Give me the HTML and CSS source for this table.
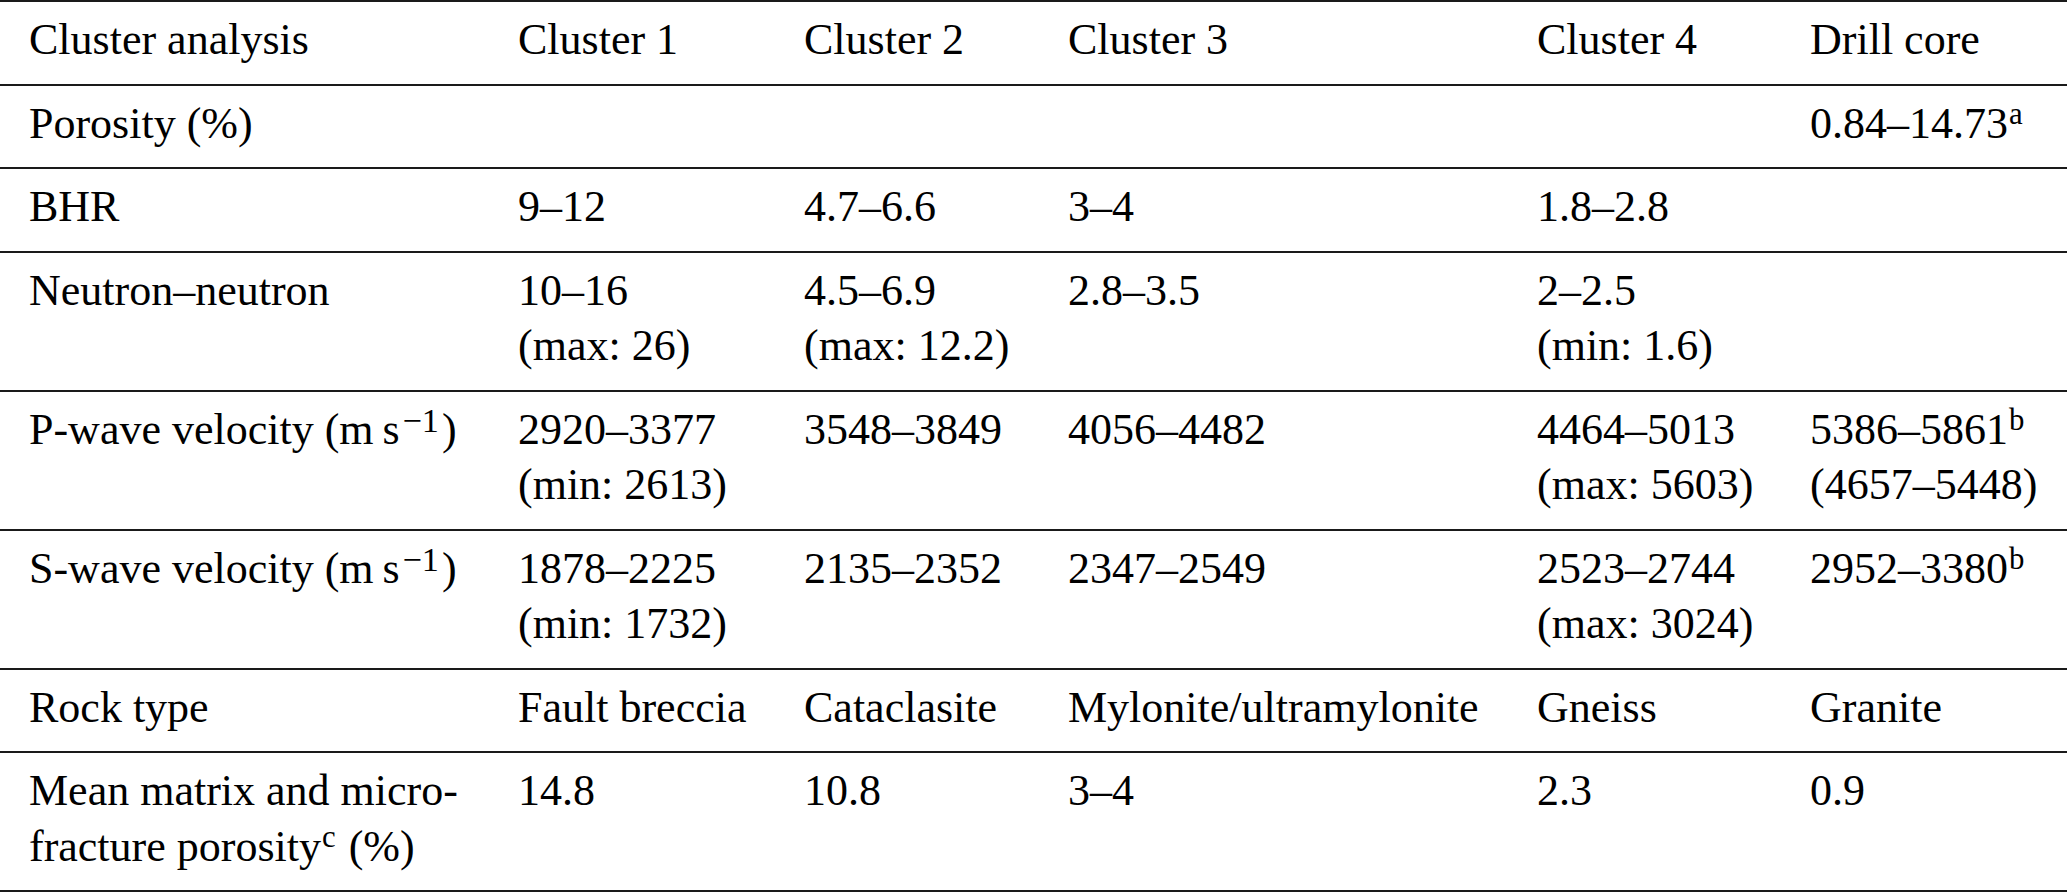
FILE: index.html
```html
<!DOCTYPE html>
<html lang="en">
  <head>
    <meta charset="UTF-8" />
    <meta name="viewport" content="width=device-width, initial-scale=1.0" />
    <title>Cluster analysis</title>

    <link rel="stylesheet" href="styles.css">
  </head>
  <body>
    <table class="data-table">
      <colgroup>
        <col class="col-label" />
        <col class="col-c1" />
        <col class="col-c2" />
        <col class="col-c3" />
        <col class="col-c4" />
        <col class="col-core" />
      </colgroup>
      <thead>
        <tr>
          <th>Cluster analysis</th>
          <th>Cluster 1</th>
          <th>Cluster 2</th>
          <th>Cluster 3</th>
          <th>Cluster 4</th>
          <th>Drill core</th>
        </tr>
      </thead>
      <tbody>
        <tr>
          <td>Porosity (%)</td>
          <td></td>
          <td></td>
          <td></td>
          <td></td>
          <td>0.84–14.73<sup>a</sup></td>
        </tr>
        <tr>
          <td>BHR</td>
          <td>9–12</td>
          <td>4.7–6.6</td>
          <td>3–4</td>
          <td>1.8–2.8</td>
          <td></td>
        </tr>
        <tr>
          <td>Neutron–neutron</td>
          <td>10–16<br />(max: 26)</td>
          <td>4.5–6.9<br />(max: 12.2)</td>
          <td>2.8–3.5</td>
          <td>2–2.5<br />(min: 1.6)</td>
          <td></td>
        </tr>
        <tr>
          <td>P-wave velocity (m&thinsp;s<sup class="unit-exp">−1</sup>)</td>
          <td>2920–3377<br />(min: 2613)</td>
          <td>3548–3849</td>
          <td>4056–4482</td>
          <td>4464–5013<br />(max: 5603)</td>
          <td>5386–5861<sup>b</sup><br />(4657–5448)</td>
        </tr>
        <tr>
          <td>S-wave velocity (m&thinsp;s<sup class="unit-exp">−1</sup>)</td>
          <td>1878–2225<br />(min: 1732)</td>
          <td>2135–2352</td>
          <td>2347–2549</td>
          <td>2523–2744<br />(max: 3024)</td>
          <td>2952–3380<sup>b</sup></td>
        </tr>
        <tr>
          <td>Rock type</td>
          <td>Fault breccia</td>
          <td>Cataclasite</td>
          <td>Mylonite/ultramylonite</td>
          <td>Gneiss</td>
          <td>Granite</td>
        </tr>
        <tr>
          <td>Mean matrix and micro-<br />fracture porosity<sup>c</sup> (%)</td>
          <td>14.8</td>
          <td>10.8</td>
          <td>3–4</td>
          <td>2.3</td>
          <td>0.9</td>
        </tr>
      </tbody>
    </table>
  </body>
</html>
```

FILE: styles.css
```css
body {
  margin: 0;
  background: #fff;
  color: #000;
  font-family: "Liberation Serif", "Times New Roman", serif;
  font-size: 44px;
}

.data-table {
  width: 2067px;
  table-layout: fixed;
  border-collapse: collapse;
  border-bottom: 2px solid #1a1a1a;
}

.col-label {
  width: 489px;
}
.col-c1 {
  width: 286px;
}
.col-c2 {
  width: 264px;
}
.col-c3 {
  width: 469px;
}
.col-c4 {
  width: 273px;
}
.col-core {
  width: 286px;
}

.data-table tr {
  border-top: 2px solid #1a1a1a;
}

.data-table th,
.data-table td {
  padding: 10px 29px 16px 29px;
  text-align: left;
  vertical-align: top;
  font-weight: normal;
  line-height: 55.5px;
  white-space: nowrap;
}

.data-table td:last-child,
.data-table th:last-child {
  padding-right: 0;
}

sup {
  font-size: 0.7em;
  line-height: 0;
  vertical-align: 14px;
  margin: 0 2px 0 1px;
}

/* exponent of the unit is set a bit larger, as in the source */
.unit-exp {
  font-size: 0.78em;
  vertical-align: 12px;
  margin-left: 3px;
  margin-right: 3px;
}
```
